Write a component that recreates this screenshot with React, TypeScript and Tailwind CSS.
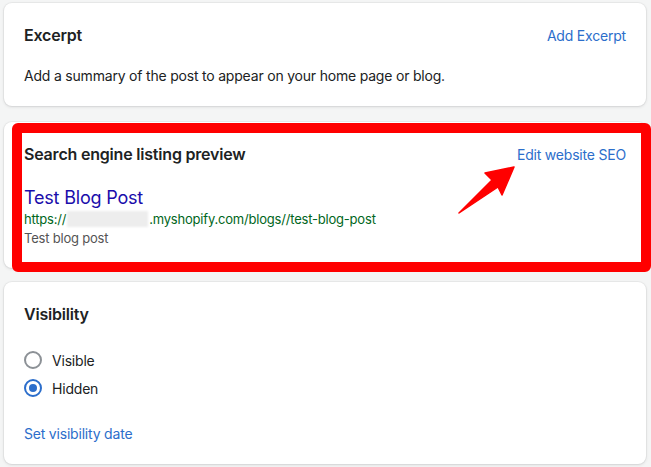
import React from "react";

const font = { fontFamily: "Inter, 'Liberation Sans', sans-serif" };

function Card({ children, className = "" }: { children: React.ReactNode; className?: string }) {
  return (
    <div
      className={`relative rounded-lg bg-white p-5 shadow-[0_0_0_1px_rgba(63,63,68,0.05),0_1px_3px_rgba(63,63,68,0.15)] ${className}`}
    >
      {children}
    </div>
  );
}

function CardHeader({ title, action }: { title: string; action?: string }) {
  return (
    <div className="flex h-6 items-center justify-between">
      <h2 className="text-[16px] font-semibold text-[#202223]">{title}</h2>
      {action && (
        <button type="button" className="text-[14px] text-[#2c6ecb]">
          {action}
        </button>
      )}
    </div>
  );
}

function Radio({ label, checked }: { label: string; checked?: boolean }) {
  return (
    <label className="flex h-7 items-center gap-[10px] text-[14px] text-[#202223]">
      <span
        className={`flex size-[18px] items-center justify-center rounded-full border-2 ${
          checked ? "border-[#2c6ecb]" : "border-[#8c9196]"
        }`}
      >
        {checked && <span className="size-2 rounded-full bg-[#2c6ecb]" />}
      </span>
      {label}
    </label>
  );
}

export default function App() {
  return (
    <div
      className="flex min-h-[467px] flex-col overflow-hidden bg-[#f4f5f5] pt-[3px] pl-1 pr-[5px] tracking-[-0.2px]"
      style={font}
    >
      <Card>
        <CardHeader title="Excerpt" action="Add Excerpt" />
        <p className="mt-[19px] text-[14px] leading-5 text-[#202223]">
          Add a summary of the post to appear on your home page or blog.
        </p>
      </Card>

      <Card className="mt-[16px]">
        <CardHeader title="Search engine listing preview" action="Edit website SEO" />
        <div className="mt-5">
          <div className="text-[18px] leading-6 text-[#1a0dab]">Test Blog Post</div>
          <div className="flex items-center text-[13px] leading-[18px] text-[#006621]">
            https://
            <span className="mx-[1px] inline-block h-4 w-[81px] bg-[#ededed] blur-[1px]" />
            .myshopify.com/blogs//test-blog-post
          </div>
          <div className="text-[13px] leading-5 text-[#545454]">Test blog post</div>
        </div>

        {/* annotation */}
        <div className="pointer-events-none absolute top-[1px] right-[-5px] bottom-[-4px] left-2 rounded-md border-[10px] border-[#ff0000]" />
        <svg
          className="pointer-events-none absolute top-0 left-0"
          width="651"
          height="150"
          viewBox="0 0 651 150"
        >
          <polygon
            points="510,45 481,51 488,58 455,91 494,65 498,73"
            fill="#ff0000"
            stroke="#ff0000"
            strokeWidth="1.5"
            strokeLinejoin="round"
          />
        </svg>
      </Card>

      <Card className="mt-[14px]">
        <CardHeader title="Visibility" />
        <div className="mt-5 flex flex-col">
          <Radio label="Visible" />
          <Radio label="Hidden" checked />
        </div>
        <button type="button" className="mt-[22px] block text-[14px] leading-5 text-[#2c6ecb]">
          Set visibility date
        </button>
      </Card>
    </div>
  );
}
